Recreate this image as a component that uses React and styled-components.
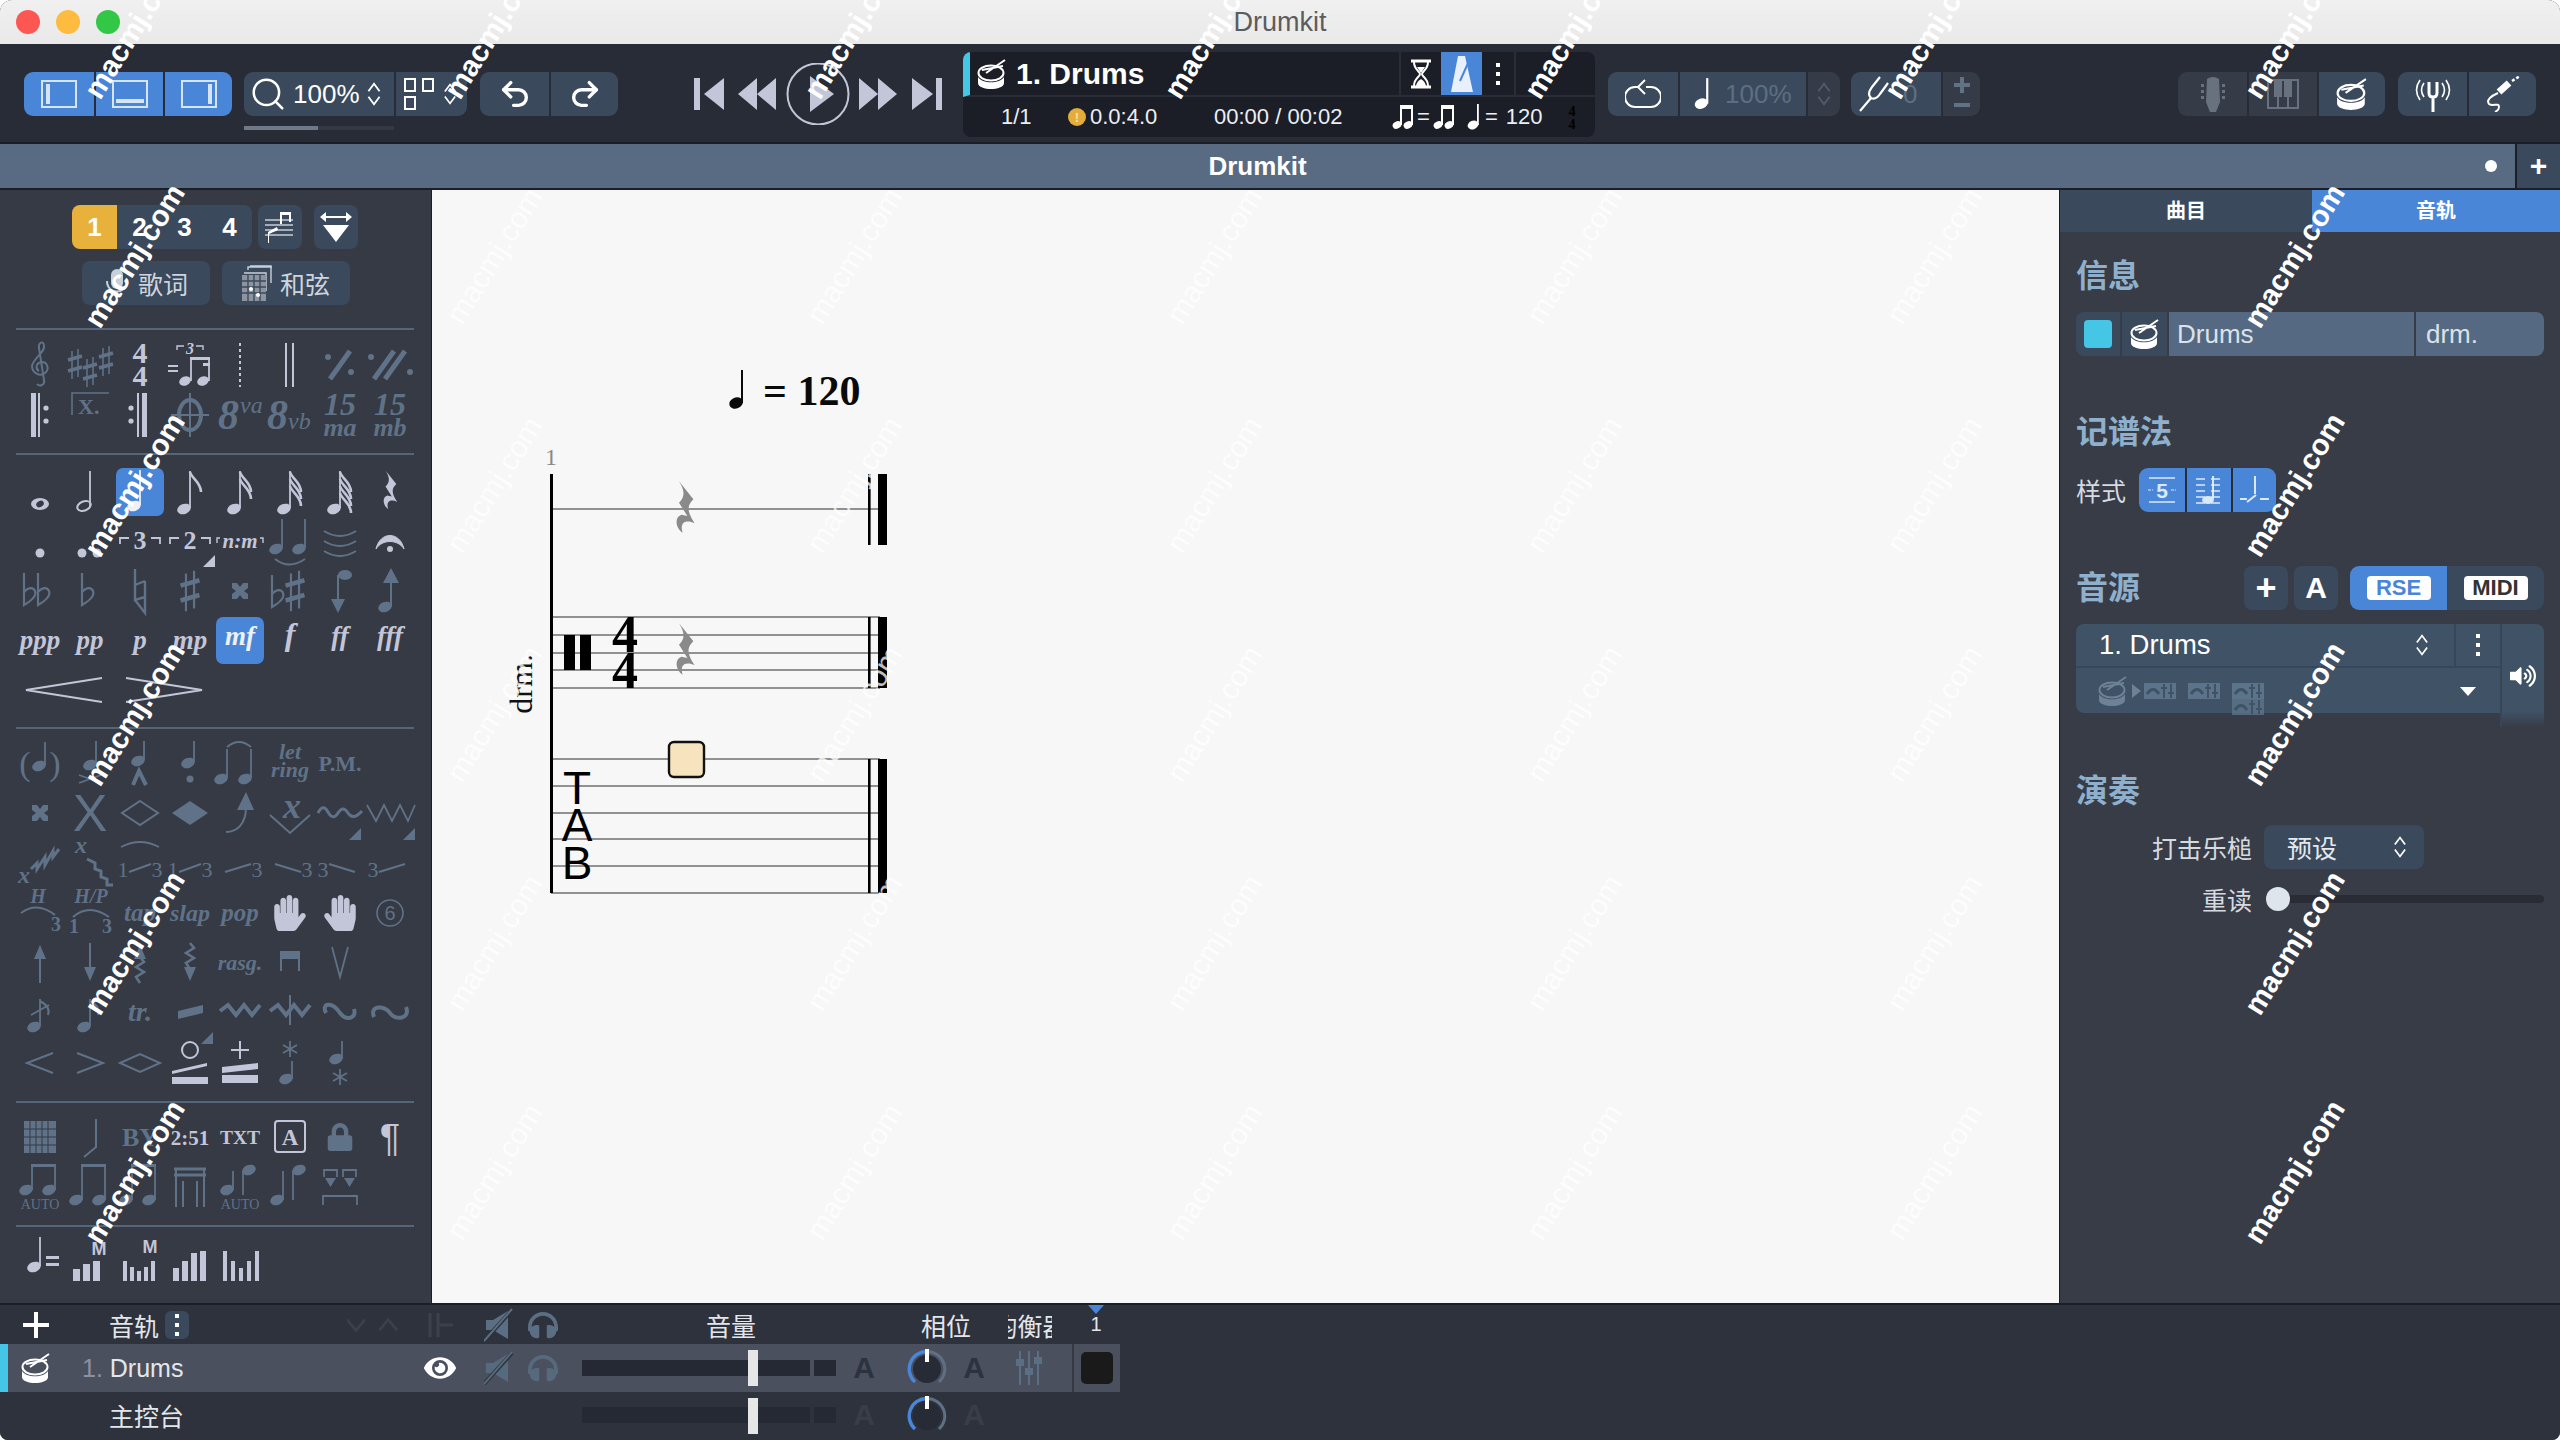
import React from 'react';
import styled, { createGlobalStyle } from 'styled-components';
import { FaEye, FaHandPaper, FaLock, FaVolumeUp, FaHeadphones } from 'react-icons/fa';
import { Undo2, Redo2, Search } from 'lucide-react';

const SANS = '"Liberation Sans", "Noto Sans CJK SC", sans-serif';
const SERIF = '"Liberation Serif", "Noto Sans CJK SC", serif';

const GlobalStyle = createGlobalStyle`
  html, body { margin: 0; padding: 0; background: #fff; }
  * { box-sizing: border-box; }
`;

const Page = styled.div`
  position: relative;
  width: 2560px;
  height: 1440px;
  overflow: hidden;
  border-radius: 12px 12px 8px 8px;
  font-family: ${SANS};
  background: #2e323c;
  display: flex;
  flex-direction: column;
`;

const TitleBar = styled.header`
  position: relative;
  height: 44px;
  flex: none;
  background: linear-gradient(#f0f0f0, #e9e9e9);
  color: #5c5c5c;
  font-size: 27px;
  display: flex;
  align-items: center;
  justify-content: center;
`;

const Lights = styled.div`
  position: absolute;
  left: 16px;
  top: 10px;
  display: flex;
  gap: 16px;
`;

const Light = styled.span`
  width: 24px;
  height: 24px;
  border-radius: 50%;
  background: ${p => p.$c};
`;

const Toolbar = styled.div`
  height: 100px;
  flex: none;
  background: #282c36;
  border-bottom: 2px solid #1b1e26;
  display: flex;
  align-items: flex-start;
  padding: 28px 0 0 24px;
`;

const Seg = styled.div`
  display: flex;
  height: 44px;
  margin-left: ${p => p.$ml || 0}px;
  border-radius: 9px;
  overflow: hidden;
  flex: none;
`;

const SegBtn = styled.div`
  width: ${p => p.$w}px;
  height: 100%;
  display: flex;
  align-items: center;
  justify-content: ${p => p.$start ? 'flex-start' : 'center'};
  gap: ${p => p.$gap || 0}px;
  padding-left: ${p => p.$pl || 0}px;
  background: ${p => ({ blue: '#4a86d8', slate: '#3a4a5c', dim: '#363c47', mute: '#333a45' }[p.$tone || 'slate'])};
  color: ${p => p.$fg || '#fff'};
  font-size: ${p => p.$fs || 26}px;
  & + & { border-left: 2px solid #282c36; }
`;

const ZoomCol = styled.div`
  margin-left: 12px;
  flex: none;
`;

const ZoomTrack = styled.div`
  width: 150px;
  height: 4px;
  margin-top: 10px;
  background: #343843;
`;

const ZoomFill = styled.div`
  width: 74px;
  height: 100%;
  background: #70788a;
`;

const Transport = styled.div`
  width: 248px;
  margin-left: 76px;
  height: 62px;
  margin-top: -9px;
  flex: none;
  color: #c3c6d8;
`;

const Lcd = styled.div`
  width: 632px;
  height: 85px;
  margin: -20px 0 0 21px;
  flex: none;
  background: #1b1e26;
  border-radius: 8px;
  overflow: hidden;
  color: #fff;
`;

const LcdTop = styled.div`
  height: 45px;
  display: flex;
  align-items: center;
  border-left: 7px solid #46c6e6;
  border-bottom: 2px solid #2a2d36;
  padding-left: 7px;
`;

const LcdName = styled.div`
  flex: 1;
  margin-left: 9px;
  font-size: 30px;
  font-weight: 700;
`;

const LcdCell = styled.div`
  width: ${p => p.$w}px;
  height: 100%;
  display: flex;
  align-items: center;
  justify-content: center;
  background: ${p => p.$blue ? '#4a86d8' : 'transparent'};
  border-left: ${p => p.$line ? '2px solid #2a2d36' : 'none'};
`;

const LcdBottom = styled.div`
  height: 40px;
  display: grid;
  grid-template-columns: 38px 67px 146px 178px 75px 99px 1fr;
  align-items: center;
  font-size: 22px;
  color: #eceef2;
`;

const Inline = styled.div`
  display: flex;
  align-items: center;
  gap: ${p => p.$gap || 0}px;
`;

const WarnDot = styled.span`
  width: 18px;
  height: 18px;
  border-radius: 50%;
  background: #e4ad3a;
  color: #f7e0ab;
  font-size: 13px;
  font-weight: 700;
  display: flex;
  align-items: center;
  justify-content: center;
`;

const TempoValue = styled.span`
  margin-left: 4px;
`;

const DocBar = styled.div`
  height: 46px;
  flex: none;
  display: flex;
  background: #586b82;
  border-bottom: 2px solid #1b1e26;
  color: #fff;
`;

const DocTitle = styled.div`
  position: relative;
  flex: 1;
  display: flex;
  align-items: center;
  justify-content: center;
  font-size: 26px;
  font-weight: 700;
`;

const DocDot = styled.span`
  position: absolute;
  right: 18px;
  top: 16px;
  width: 12px;
  height: 12px;
  border-radius: 50%;
  background: #fff;
`;

const DocPlus = styled.div`
  width: 45px;
  display: flex;
  align-items: center;
  justify-content: center;
  background: #3a4a5c;
  border-left: 2px solid #1b1e26;
  font-size: 30px;
  font-weight: 700;
`;

const Main = styled.div`
  flex: 1;
  min-height: 0;
  display: flex;
`;

const LeftPanel = styled.aside`
  width: 432px;
  flex: none;
  background: #363a44;
  border-right: 1px solid #1b1e26;
  padding-top: 15px;
`;

const ButtonRow = styled.div`
  display: flex;
  padding-left: ${p => p.$pl}px;
  gap: ${p => p.$gap || 0}px;
  margin-top: ${p => p.$mt || 0}px;
`;

const Tool = styled.div`
  width: ${p => p.$w || 45}px;
  height: 44px;
  display: flex;
  align-items: center;
  justify-content: center;
  gap: 8px;
  background: ${p => p.$on ? '#e8b13b' : '#3a4a5c'};
  color: ${p => p.$fg || '#fff'};
  font-size: ${p => p.$fs || 26}px;
  font-weight: ${p => p.$bold ? 700 : 400};
  border-radius: ${p => p.$r || '8px'};
  margin-left: ${p => p.$ml || 0}px;
  & + & { border-left: ${p => p.$joined ? '2px solid #363a44' : 'none'}; }
`;

const Divider = styled.div`
  height: 2px;
  margin: ${p => p.$mt}px 17px ${p => p.$mb}px 16px;
  background: #566679;
`;

const PaletteRow = styled.div`
  display: grid;
  grid-template-columns: repeat(8, 50px);
  height: ${p => p.$h || 50}px;
  padding-left: 15px;
`;

const Cell = styled.div`
  position: relative;
  width: 50px;
  display: flex;
  align-items: center;
  justify-content: center;
  color: ${p => (p.$hi ? '#c3c6d8' : '#5f7288')};
  &::before {
    content: '';
    display: ${p => p.$on ? 'block' : 'none'};
    position: absolute;
    inset: 1px;
    background: #4a86d8;
    border-radius: 7px;
  }
  & > * { position: relative; }
  ${p => p.$on ? 'color: #eef1f7;' : ''}
`;

const Corner = styled.span`
  position: absolute !important;
  right: ${p => p.$r ?? 0}px;
  bottom: ${p => p.$b ?? 0}px;
  width: 0;
  height: 0;
  border-bottom: 12px solid ${p => p.$hi ? '#c3c6d8' : '#5f7288'};
  border-left: 12px solid transparent;
`;

const Score = styled.section`
  flex: 1;
  min-width: 0;
  background: #f7f7f7;
`;

const RightPanel = styled.aside`
  width: 501px;
  flex: none;
  background: #383c46;
  border-left: 1px solid #1b1e26;
  color: #d5dae1;
`;

const Tabs = styled.div`
  display: flex;
  height: 42px;
`;

const Tab = styled.div`
  flex: ${p => p.$f};
  display: flex;
  align-items: center;
  justify-content: center;
  padding-bottom: 3px;
  background: ${p => p.$on ? '#4a86d8' : '#3a4a5c'};
  color: #fff;
  font-size: 20px;
  font-weight: 700;
`;

const Inspector = styled.div`
  padding: 0 16px 0 16px;
`;

const Heading = styled.h3`
  margin: ${p => p.$mt}px 0 0;
  color: #8fb0cc;
  font-size: 32px;
  line-height: 40px;
  font-weight: 700;
`;

const InfoRow = styled.div`
  display: flex;
  height: 44px;
  margin-top: 16px;
  border-radius: 8px;
  overflow: hidden;
`;

const InfoCell = styled.div`
  width: ${p => p.$w}px;
  flex: ${p => p.$grow ? 1 : 'none'};
  display: flex;
  align-items: center;
  padding-left: ${p => p.$pl || 0}px;
  justify-content: ${p => p.$pl ? 'flex-start' : 'center'};
  background: ${p => p.$light ? '#556a82' : '#3a4a5c'};
  color: #dbe2ea;
  font-size: 26px;
  & + & { border-left: 2px solid #383c46; }
`;

const Swatch = styled.span`
  width: 28px;
  height: 28px;
  border-radius: 4px;
  background: #46c6e6;
`;

const FieldRow = styled.div`
  display: flex;
  align-items: center;
  margin-top: ${p => p.$mt || 0}px;
  height: 44px;
`;

const FieldLabel = styled.label`
  width: ${p => p.$w}px;
  font-size: 25px;
  color: #d5dae1;
  text-align: ${p => p.$right ? 'right' : 'left'};
  flex: none;
`;

const SoundHead = styled.div`
  display: flex;
  align-items: center;
  margin-top: 54px;
`;

const SoundActions = styled.div`
  margin-left: auto;
  display: flex;
  gap: 6px;
`;

const SquareBtn = styled.div`
  width: 44px;
  height: 44px;
  border-radius: 8px;
  background: #3a4a5c;
  color: #fff;
  font-size: ${p => p.$fs}px;
  font-weight: 700;
  display: flex;
  align-items: center;
  justify-content: center;
`;

const EngineSeg = styled.div`
  display: flex;
  margin-left: 6px;
  border-radius: 9px;
  overflow: hidden;
`;

const EngineBtn = styled.div`
  width: 97px;
  height: 44px;
  background: ${p => p.$on ? '#4a86d8' : '#3a4a5c'};
  display: flex;
  align-items: center;
  justify-content: center;
`;

const EngineTag = styled.span`
  width: 64px;
  height: 24px;
  background: #fff;
  border-radius: 4px;
  font-size: 22px;
  font-weight: 700;
  color: ${p => p.$c};
  display: flex;
  align-items: center;
  justify-content: center;
`;

const SoundBox = styled.div`
  position: relative;
  height: 103px;
  margin-top: 14px;
  display: grid;
  grid-template-columns: 1fr 44px;
`;

const SoundMain = styled.div`
  display: flex;
  flex-direction: column;
`;

const SoundTop = styled.div`
  height: 44px;
  display: flex;
  background: #3f5266;
  border-radius: 8px 0 0 0;
  border-bottom: 2px solid #37465a;
  color: #fff;
  font-size: 27.5px;
`;

const SoundName = styled.div`
  flex: 1;
  display: flex;
  align-items: center;
  justify-content: space-between;
  padding: 0 24px 0 23px;
`;

const SoundMenu = styled.div`
  width: 46px;
  display: flex;
  align-items: center;
  justify-content: center;
  border-left: 2px solid #37465a;
`;

const SoundFx = styled.div`
  position: relative;
  height: 45px;
  background: #3f5266;
  border-radius: 0 0 0 8px;
  display: flex;
  align-items: center;
  padding-left: 22px;
  gap: 12px;
  color: #6d8296;
`;

const FxArrow = styled.span`
  margin: 0 -9px 0 -8px;
  border-top: 7px solid transparent;
  border-bottom: 7px solid transparent;
  border-left: 9px solid #6d8296;
`;

const ChipStack = styled.span`
  position: relative;
  display: flex;
`;

const ChipBelow = styled.span`
  position: absolute;
  left: 0;
  top: 16px;
  opacity: .8;
`;

const SoundVol = styled.div`
  background: linear-gradient(#3f5266 85%, #383c46);
  border-left: 2px solid #37465a;
  border-radius: 0 8px 0 0;
  display: flex;
  align-items: center;
  justify-content: center;
  color: #fff;
  font-size: 26px;
`;

const FxDrop = styled.span`
  position: absolute;
  right: 24px;
  top: 19px;
  border-left: 8px solid transparent;
  border-right: 8px solid transparent;
  border-top: 9px solid #fff;
`;

const Select = styled.div`
  width: 160px;
  height: 44px;
  margin-left: 12px;
  border-radius: 8px;
  background: #3a4a5c;
  color: #e6eaef;
  font-size: 25px;
  display: flex;
  align-items: center;
  justify-content: space-between;
  padding: 0 16px 0 23px;
`;

const Slider = styled.div`
  position: relative;
  flex: 1;
  margin-left: 26px;
  height: 8px;
  background: #292c35;
  border-radius: 4px;
`;

const Knob = styled.span`
  position: absolute;
  left: -12px;
  top: -8px;
  width: 24px;
  height: 24px;
  border-radius: 50%;
  background: #dfe5ec;
`;

const Mixer = styled.div`
  flex: none;
  height: 137px;
  background: #2e323c;
  border-top: 2px solid #1b1e26;
  color: #e3e6eb;
`;

const MixerRow = styled.div`
  display: grid;
  grid-template-columns: 8px 56px 346px 60px 58px 30px 278px 56px 70px 24px 86px 48px 1fr;
  align-items: center;
  height: ${p => p.$h || 48}px;
  font-size: 25px;
  background: ${p => p.$on ? 'linear-gradient(90deg, #4b505e 0 1120px, #2e323c 1120px)' : 'transparent'};
`;

const Accent = styled.div`
  height: 100%;
  background: ${p => p.$on ? '#46c6e6' : 'transparent'};
`;

const Slot = styled.div`
  height: 100%;
  display: flex;
  align-items: center;
  justify-content: ${p => p.$start ? 'flex-start' : 'center'};
  padding-left: ${p => p.$pl || 0}px;
  color: ${p => p.$c || 'inherit'};
  gap: ${p => p.$gap || 0}px;
  white-space: nowrap;
`;

const RowNo = styled.span`
  color: #8b919e;
  margin-left: 18px;
`;

const MenuChip = styled.span`
  width: 27px;
  height: 28px;
  margin-left: 6px;
  background: #3a4a5c;
  border-radius: 6px;
  display: flex;
  align-items: center;
  justify-content: center;
`;

const HeaderArrows = styled.svg`
  margin-left: 158px;
`;

const FaderWrap = styled.div`
  position: relative;
  height: 100%;
  display: flex;
  align-items: center;
  gap: 4px;
  padding-left: 24px;
`;

const FaderTrack = styled.span`
  width: ${p => p.$w}px;
  height: 16px;
  background: #252934;
`;

const FaderHandle = styled.span`
  position: absolute;
  left: 190px;
  top: 6px;
  width: 10px;
  height: 36px;
  background: #e6e6e6;
`;

const LetterA = styled.span`
  font-size: 30px;
  font-weight: 700;
  color: ${p => p.$dim ? '#383d48' : '#2c3340'};
`;

const EqClip = styled.div`
  width: 44px;
  margin-left: 22px;
  overflow: hidden;
  display: flex;
  justify-content: center;
  white-space: nowrap;
`;

const BarCell = styled.div`
  position: relative;
  height: 100%;
  display: flex;
  align-items: center;
  justify-content: center;
  border-left: ${p => p.$line ? '2px solid #363a44' : 'none'};
  font-size: 20px;
`;

const BarMark = styled.span`
  position: absolute;
  top: 0;
  left: 16px;
  border-left: 8px solid transparent;
  border-right: 8px solid transparent;
  border-top: 9px solid #4a86d8;
`;

const BeatBox = styled.span`
  width: 32px;
  height: 32px;
  border-radius: 5px;
  background: #1a1a1a;
`;

const WatermarkLayer = styled.div`
  position: absolute;
  left: -46px;
  top: -88px;
  display: grid;
  grid-template-columns: repeat(7, 360px);
  grid-auto-rows: 229px;
  pointer-events: none;
`;

const Watermark = styled.span`
  display: flex;
  align-items: center;
  justify-content: center;
  transform: rotate(-58deg);
  font-size: ${p => p.$faint ? 30 : 29.5}px;
  font-weight: ${p => p.$faint ? 400 : 700};
  color: #fff;
  opacity: ${p => p.$faint ? 0.75 : 1};
  white-space: nowrap;
`;

/* ---- drawings ---- */

const G = ({ children, w = 50, h = 48 }) => (
  <svg width={w} height={h} viewBox={`0 0 ${w} ${h}`} fill="currentColor" style={{ overflow: 'visible', flex: 'none' }}>
    {children}
  </svg>
);

const Head = ({ x, y, rx = 7, ry = 5 }) => (
  <ellipse cx={x} cy={y} rx={rx} ry={ry} transform={`rotate(-22 ${x} ${y})`} />
);

const Stem = ({ x, y1, y2, w = 1.8 }) => <line x1={x} y1={y1} x2={x} y2={y2} stroke="currentColor" strokeWidth={w} />;

const Note = ({ x = 20, y = 38, h = 30 }) => (
  <>
    <Head x={x} y={y} />
    <Stem x={x + 6} y1={y - 1} y2={y - h} />
  </>
);

const T = ({ x = 25, y, s, b = true, i = false, a = 'middle', f = SERIF, o, children }) => (
  <text x={x} y={y} fontSize={s} fontWeight={b ? 700 : 400} fontStyle={i ? 'italic' : 'normal'} textAnchor={a} fontFamily={f} opacity={o}>
    {children}
  </text>
);

const L = ({ d, w = 2, ...rest }) => <path d={d} fill="none" stroke="currentColor" strokeWidth={w} {...rest} />;

const Sharp = ({ x, y, k = 1 }) => (
  <g transform={`translate(${x} ${y}) scale(${k})`}>
    <L d="M-3 -13 V15 M3 -15 V13" w={1.6} />
    <L d="M-7 -4 L7 -8 M-7 7 L7 3" w={3.4} />
  </g>
);

const Flat = ({ x, y, k = 1 }) => (
  <g transform={`translate(${x} ${y}) scale(${k})`}>
    <L d="M-5 -20 V12 C2 8 8 3 6 -2 C4 -7 -2 -5 -5 -1" w={2.2} />
  </g>
);

const Flags = ({ x, y, n }) => (
  <>
    {Array.from({ length: n }, (_, i) => (
      <L key={i} d={`M${x} ${y + i * 7} C${x + 2} ${y + 7 + i * 7} ${x + 11} ${y + 10 + i * 7} ${x + 11} ${y + 20 + i * 7}`} w={2.6} />
    ))}
  </>
);

const Rest = ({ x = 25, y = 24, k = 1 }) => (
  <path
    transform={`translate(${x} ${y}) scale(${k})`}
    d="M-5 -24 L7 -9 C2 -4 1 0 8 11 C2 8 -5 9 -2 19 C-8 15 -9 6 -3 4 L2 5 L-5 -6 C0 -11 0 -16 -5 -24Z"
  />
);

const XHead = ({ x = 25, y = 24, k = 1 }) => (
  <path transform={`translate(${x} ${y}) scale(${k})`} d="M-8 -8 H-3 L0 -4 L3 -8 H8 V-3 L4 0 L8 3 V8 H3 L0 4 L-3 8 H-8 V3 L-4 0 L-8 -3Z" />
);

const DrumIcon = ({ s = 30, c = 'currentColor' }) => (
  <svg width={s} height={s} viewBox="0 0 30 30" style={{ flex: 'none', color: c }}>
    <ellipse cx="14" cy="14" rx="12.5" ry="7.5" fill="none" stroke="currentColor" strokeWidth="2" />
    <path d="M1 18 C5 25 23 25 27 18 V24 C27 28 20 30 14 30 S1 28 1 24Z" fill="currentColor" />
    <path d="M9 14 L28 1 M5 11 L26 7" stroke="currentColor" strokeWidth="2" fill="none" />
  </svg>
);

const Stepper = ({ w = 16, h = 28, c = '#fff' }) => (
  <svg width={w} height={h} viewBox="0 0 16 28" fill="none" stroke={c} strokeWidth="2">
    <path d="M2 11 L8 3 L14 11 M2 17 L8 25 L14 17" />
  </svg>
);

const VDots = ({ c = '#fff' }) => (
  <svg width="6" height="22" viewBox="0 0 6 22" fill={c}>
    <rect x="1" width="4" height="4" />
    <rect x="1" y="9" width="4" height="4" />
    <rect x="1" y="18" width="4" height="4" />
  </svg>
);

const PanelIcon = ({ side }) => (
  <svg width="36" height="28" viewBox="0 0 36 28" fill="none" stroke="#d5e4f7" strokeWidth="2">
    <rect x="1" y="1" width="34" height="26" />
    {side === 'left' && <rect x="5" y="4" width="4" height="20" fill="#d5e4f7" stroke="none" />}
    {side === 'bottom' && <rect x="4" y="19" width="28" height="4" fill="#d5e4f7" stroke="none" />}
    {side === 'right' && <rect x="27" y="4" width="4" height="20" fill="#d5e4f7" stroke="none" />}
  </svg>
);

const LayoutIcon = () => (
  <svg width="30" height="32" viewBox="0 0 30 32" fill="none" stroke="#fff" strokeWidth="2">
    <rect x="1" y="1" width="10" height="12" />
    <rect x="19" y="1" width="10" height="12" />
    <rect x="1" y="19" width="10" height="12" />
  </svg>
);

const TransportIcons = () => (
  <svg width="248" height="62" viewBox="694 63 248 62" fill="currentColor">
    <rect x="694" y="78" width="6" height="32" />
    <path d="M724 78 V110 L704 94Z" />
    <path d="M738 94 L757 78 V110Z M757 94 L776 78 V110Z" />
    <circle cx="818" cy="94" r="30.5" fill="none" stroke="currentColor" strokeWidth="2" />
    <path d="M810 76 V112 L834 94Z" />
    <path d="M859 78 L878 94 L859 110Z M878 78 L897 94 L878 110Z" />
    <path d="M912 78 L933 94 L912 110Z" />
    <rect x="936" y="78" width="6" height="32" />
  </svg>
);

const Hourglass = () => (
  <svg width="24" height="30" viewBox="0 0 24 30" fill="none" stroke="#fff" strokeWidth="2">
    <path d="M2 2 H22 M2 28 H22" strokeWidth="3" />
    <path d="M5 3 C5 11 11 12 11 15 C11 18 5 19 5 27 M19 3 C19 11 13 12 13 15 C13 18 19 19 19 27" />
    <path d="M7 27 C8 22 11 21 12 20 C13 21 16 22 17 27Z M8 8 H16 L12 14Z" fill="#fff" stroke="none" />
  </svg>
);

const Metronome = () => (
  <svg width="24" height="36" viewBox="0 0 24 36" fill="#e8f0fb">
    <path d="M8 0 H15 L23 36 H1Z M12 22 L20 4" />
    <path d="M10 25 L19 5" stroke="#4a86d8" strokeWidth="2" fill="none" />
  </svg>
);

const TinyNote = ({ s = 1, c = '#fff' }) => (
  <svg width={10 * s + 4} height={26 * s} viewBox="0 0 14 26" fill={c}>
    <ellipse cx="6" cy="21" rx="5.5" ry="4.2" transform="rotate(-22 6 21)" />
    <rect x="10" width="1.8" height="21" />
  </svg>
);

const Beamed = () => (
  <svg width="22" height="26" viewBox="0 0 22 26" fill="#fff">
    <ellipse cx="5" cy="21" rx="4.5" ry="3.6" transform="rotate(-22 5 21)" />
    <ellipse cx="16" cy="21" rx="4.5" ry="3.6" transform="rotate(-22 16 21)" />
    <rect x="8" y="2" width="2" height="19" />
    <rect x="19" y="2" width="2" height="19" />
    <rect x="8" y="1" width="13" height="4" />
  </svg>
);

const TimeSig = () => (
  <svg width="12" height="26" viewBox="0 0 12 26">
    <text x="6" y="12" textAnchor="middle" fontSize="14" fontWeight="700" fontFamily={SERIF} fill="#000">4</text>
    <text x="6" y="25" textAnchor="middle" fontSize="14" fontWeight="700" fontFamily={SERIF} fill="#000">4</text>
  </svg>
);

const LoopIcon = () => (
  <svg width="36" height="32" viewBox="0 0 36 32" fill="none" stroke="#fff" strokeWidth="2">
    <path d="M21 9 H26 A10 10 0 0 1 26 29 H10 A10 10 0 0 1 10 9 H14" />
    <path d="M20 2 L13 9 L20 16" />
  </svg>
);

const ForkIcon = () => (
  <svg width="34" height="36" viewBox="0 0 34 36" fill="none" stroke="#fff" strokeWidth="2.2">
    <path d="M1 35 L12 22 M12 22 C8 18 11 14 13 11 L21 1 M12 22 C16 24 19 21 21 18 L29 7" />
  </svg>
);

const Headstock = () => (
  <svg width="26" height="36" viewBox="0 0 26 36" fill="#68727f">
    <path d="M7 3 Q13 -1 19 3 L20 26 L16 36 H10 L6 26Z" />
    <rect x="1" y="8" width="3" height="3" />
    <rect x="1" y="14" width="3" height="3" />
    <rect x="1" y="20" width="3" height="3" />
    <rect x="22" y="8" width="3" height="3" />
    <rect x="22" y="14" width="3" height="3" />
    <rect x="22" y="20" width="3" height="3" />
  </svg>
);

const PianoIcon = () => (
  <svg width="32" height="30" viewBox="0 0 32 30" fill="none" stroke="#68727f" strokeWidth="2">
    <rect x="1" y="1" width="30" height="28" />
    <path d="M11 29 V1 M21 29 V1" />
    <path d="M8 1 H14 V17 H8Z M18 1 H24 V17 H18Z" fill="#68727f" />
  </svg>
);

const ForkWaves = () => (
  <svg width="36" height="36" viewBox="0 0 36 36" fill="none" stroke="#fff" strokeWidth="1.6">
    <path d="M14 6 V17 Q14 21 18 21 Q22 21 22 17 V6 M18 21 V36" strokeWidth="3" />
    <path d="M9 7 Q4 14 9 21 M27 7 Q32 14 27 21 M5 4 Q-2 14 5 24 M31 4 Q38 14 31 24" />
  </svg>
);

const CableIcon = () => (
  <svg width="36" height="36" viewBox="0 0 36 36" fill="none" stroke="#fff" strokeWidth="2">
    <path d="M14 16 L24 7" strokeWidth="7" />
    <path d="M27 5 L35 0" strokeWidth="2.5" strokeDasharray="3 2" />
    <path d="M13 17 C6 20 1 24 4 28 C8 31 14 26 14 31 C14 34 12 35 10 36" />
  </svg>
);

const MuteIcon = ({ c }) => (
  <svg width="30" height="34" viewBox="0 0 30 34" fill={c}>
    <path d="M2 12 H9 L24 3 V31 L9 22 H2Z" />
    <path d="M0 33 L28 2" stroke="#2e323c" strokeWidth="4" />
    <path d="M0 33 L28 1" stroke={c} strokeWidth="2" />
  </svg>
);

const MixIcon = ({ c = '#5b6f84', w = 26, h = 34 }) => (
  <svg width={w} height={h} viewBox="0 0 26 34" fill={c}>
    <rect x="3" width="2" height="34" />
    <rect x="12" width="2" height="34" />
    <rect x="21" width="2" height="34" />
    <rect y="8" width="8" height="7" />
    <rect x="9" y="17" width="8" height="7" />
    <rect x="18" y="6" width="8" height="7" />
  </svg>
);

const PanKnob = ({ right = '#5f6f84' }) => (
  <svg width="40" height="40" viewBox="0 0 40 40" fill="none">
    <circle cx="20" cy="21" r="14" fill="#272b35" />
    <path d="M8 34 A17.5 17.5 0 0 1 20 3.5" stroke="#4a86d8" strokeWidth="3.4" />
    <path d="M20 3.5 A17.5 17.5 0 0 1 32 34" stroke={right} strokeWidth="3" />
    <rect x="18" y="1" width="4" height="13" fill="#fff" />
  </svg>
);

const FxChip = () => (
  <svg width="32" height="16" viewBox="0 0 32 16">
    <rect width="32" height="16" fill="#5c7489" />
    <path d="M3 11 Q9 2 15 11" stroke="#3f5266" strokeWidth="3" fill="none" />
    <path d="M20 1 V15 M27 1 V15 M17 5 H23 M24 10 H30" stroke="#3f5266" strokeWidth="2" />
  </svg>
);

const MicIcon = () => (
  <svg width="26" height="32" viewBox="0 0 26 32" fill="#c9cfd8">
    <rect x="7" y="2" width="12" height="20" rx="6" />
    <path d="M3 14 C3 28 23 28 23 14" fill="none" stroke="#c9cfd8" strokeWidth="2" />
    <rect x="12" y="24" width="2" height="7" />
  </svg>
);

const ChordIcon = () => (
  <svg width="30" height="36" viewBox="0 0 30 36" fill="none" stroke="#c9cfd8" strokeWidth="1.4">
    <path d="M6 5 V2 H30 M8 1 H29 V18 M2 8 H24 V26" />
    <rect x="0" y="10" width="24" height="26" fill="#8d939f" stroke="none" />
    <path d="M0 16 H24 M0 22 H24 M0 28 H24 M6 10 V36 M12 10 V36 M18 10 V36" stroke="#3a4a5c" />
    <circle cx="9" cy="24" r="2" fill="#fff" stroke="none" />
    <circle cx="16" cy="30" r="2" fill="#fff" stroke="none" />
  </svg>
);

const ScoreStyleIcon = ({ kind }) => (
  <svg width="30" height="30" viewBox="0 0 30 30" fill="#dbe8f8" stroke="#dbe8f8" strokeWidth="1">
    {kind === 'tab' && (
      <>
        <path d="M2 3 H28 M2 27 H28" strokeWidth="1.4" />
        <path d="M1 15 H6 M24 15 H29" strokeDasharray="3 1" />
        <text x="15" y="23" fontSize="21" fontWeight="700" textAnchor="middle" stroke="none" fontFamily={SANS}>5</text>
      </>
    )}
    {kind === 'std' && (
      <>
        <path d="M2 4 H28 M2 10 H28 M2 16 H28 M2 22 H28 M2 28 H28" strokeDasharray="9 6" strokeWidth="1.4" />
        <ellipse cx="14" cy="25" rx="6" ry="4" stroke="none" />
        <path d="M19 24 V1" strokeWidth="2" />
      </>
    )}
    {kind === 'slash' && (
      <>
        <path d="M15 1 V19 M7 27 L16 20 M0 24 H7 M20 24 H29" strokeWidth="2" fill="none" />
      </>
    )}
  </svg>
);

const ScoreDrawing = () => (
  <svg width="1627" height="1113" viewBox="432 190 1627 1113" style={{ display: 'block' }}>
    <g fill="#0a0a0a">
      <ellipse cx="736" cy="403" rx="7" ry="5.5" transform="rotate(-22 736 403)" />
      <rect x="741" y="370" width="2" height="33" />
      <text x="763" y="405" fontFamily={SERIF} fontWeight="700" fontSize="42">= 120</text>
    </g>
    <text x="551" y="465" textAnchor="middle" fontFamily={SERIF} fontSize="24" fill="#888">1</text>

    <g stroke="#6f6f6f" strokeWidth="1.4">
      <path d="M551 509 H880" />
      {[617, 635, 653, 670, 688].map(y => <path key={y} d={`M551 ${y} H880`} />)}
      {[759, 786, 813, 839, 866, 893].map(y => <path key={y} d={`M551 ${y} H880`} />)}
    </g>

    <rect x="550" y="474" width="3" height="419" fill="#000" />
    {[[474, 71], [617, 71], [759, 134]].map(([y, h]) => (
      <g key={y} fill="#000">
        <rect x="868" y={y} width="2.6" height={h} />
        <rect x="878" y={y} width="9" height={h} />
      </g>
    ))}

    <g fill="#8a8a8a">
      <Rest x={685} y={510} k={1.2} />
      <Rest x={685} y={652} k={1.2} />
    </g>

    <rect x="564" y="635" width="11" height="35" fill="#000" />
    <rect x="580" y="635" width="11" height="35" fill="#000" />
    <g fontFamily={SERIF} fontWeight="700" fontSize="52" fill="#000" textAnchor="middle">
      <text x="625" y="652">4</text>
      <text x="625" y="688">4</text>
    </g>

    <g fontFamily={SANS} fontSize="46" fill="#000" textAnchor="middle">
      <text x="577" y="804">T</text>
      <text x="577" y="841">A</text>
      <text x="577" y="879">B</text>
    </g>

    <text
      transform="translate(532 684) rotate(-90)"
      textAnchor="middle"
      fontFamily={SERIF}
      fontSize="32"
      fill="#111"
    >
      drm.
    </text>

    <rect x="669" y="742" width="35" height="35" rx="5" fill="#f7e3bd" stroke="#111" strokeWidth="2.4" />
  </svg>
);

/* ---- palette rows ---- */

const Treble = () => (
  <G><L d="M22 43 c3 3 8 1 7 -4 L24 7 c-1 -5 4 -8 5 -3 c2 7 -11 13 -12 21 c0 7 8 11 13 7 c5 -4 2 -12 -4 -11 c-5 1 -6 7 -2 9" /></G>
);

const StaffRows = () => (
  <>
    <PaletteRow>
      <Cell><Treble /></Cell>
      <Cell><G><Sharp x={10} y={23} /><Sharp x={25} y={31} /><Sharp x={41} y={20} /></G></Cell>
      <Cell $hi><G><T y={22} s={30}>4</T><T y={45} s={30}>4</T></G></Cell>
      <Cell $hi>
        <G>
          <T x={25} y={13} s={16} i>3</T>
          <L d="M12 9 V5 H19 M31 5 H38 V9" w={1.4} />
          <Head x={20} y={40} rx={6} ry={4.5} /><Head x={38} y={40} rx={6} ry={4.5} />
          <Stem x={26} y1={40} y2={18} /><Stem x={44} y1={40} y2={18} />
          <rect x="25" y="16" width="20" height="3" />
          <rect x="38" y="22" width="7" height="3" />
          <L d="M3 25 H13 M3 30 H13" w={2} />
        </G>
      </Cell>
      <Cell $hi><G><L d="M25 2 V46" strokeDasharray="3 3" /></G></Cell>
      <Cell $hi><G><L d="M21 2 V46 M28 2 V46" /></G></Cell>
      <Cell>
        <G><L d="M15 38 L35 10" w={5} /><circle cx="13" cy="16" r="3" /><circle cx="36" cy="31" r="3" /></G>
      </Cell>
      <Cell>
        <G><L d="M9 38 L29 10 M20 38 L40 10" w={5} /><circle cx="6" cy="16" r="3" /><circle cx="45" cy="31" r="3" /></G>
      </Cell>
    </PaletteRow>
    <PaletteRow>
      <Cell $hi><G><rect x="16" y="2" width="5" height="44" /><rect x="23" y="2" width="2" height="44" /><circle cx="31" cy="17" r="2.6" /><circle cx="31" cy="30" r="2.6" /></G></Cell>
      <Cell><G w={50}><L d="M7 24 V2 H44" w={1.6} /><T x={13} y={23} s={22} a="start">X.</T></G></Cell>
      <Cell $hi><G><circle cx="16" cy="17" r="2.6" /><circle cx="16" cy="30" r="2.6" /><rect x="22" y="2" width="2" height="44" /><rect x="27" y="2" width="5" height="44" /></G></Cell>
      <Cell>
        <G><ellipse cx="25" cy="24" rx="11" ry="15" fill="none" stroke="currentColor" strokeWidth="4" /><L d="M25 2 V46 M6 24 H44" /></G>
      </Cell>
      <Cell><G><T x={3} y={38} s={42} i a="start">8</T><T x={25} y={22} s={24} i b={false} a="start">va</T></G></Cell>
      <Cell><G><T x={2} y={38} s={42} i a="start">8</T><T x={23} y={38} s={24} i b={false} a="start">vb</T></G></Cell>
      <Cell><G><T y={24} s={32} i>15</T><T y={45} s={26} i>ma</T></G></Cell>
      <Cell><G><T y={24} s={32} i>15</T><T y={45} s={26} i>mb</T></G></Cell>
    </PaletteRow>
  </>
);

const noteRow = [1, 2, 3, 4].map(n => (
  <Cell $hi key={n}>
    <G><Note x={19} y={41} h={38} /><Flags x={25} y={4} n={n} /></G>
  </Cell>
));

const NoteRows = () => (
  <>
    <PaletteRow $h={49.5}>
      <Cell $hi><G><ellipse cx="25" cy="36" rx="9" ry="6" /><ellipse cx="25" cy="36" rx="4" ry="3" fill="#363a44" transform="rotate(-30 25 36)" /></G></Cell>
      <Cell $hi><G><ellipse cx="19" cy="38" rx="7" ry="4.6" fill="none" stroke="currentColor" strokeWidth="2" transform="rotate(-22 19 38)" /><Stem x={25} y1={38} y2={3} /></G></Cell>
      <Cell $on><G><Note x={19} y={38} h={36} /></G></Cell>
      {noteRow}
      <Cell $hi><G><g transform="translate(25 24) scale(.9)"><Rest x={0} y={0} /></g></G></Cell>
    </PaletteRow>
    <PaletteRow $h={49.5}>
      <Cell $hi><G><circle cx="25" cy="36" r="4.5" /></G></Cell>
      <Cell $hi><G><circle cx="17" cy="36" r="4.5" /><circle cx="32" cy="36" r="4.5" /></G></Cell>
      <Cell $hi><G><L d="M5 27 V21 H14 M36 21 H45 V27" w={1.8} /><T y={32} s={26}>3</T></G></Cell>
      <Cell $hi><G><L d="M5 27 V21 H14 M36 21 H45 V27" w={1.8} /><T y={32} s={26}>2</T></G><Corner $r={0} $b={-1} $hi /></Cell>
      <Cell $hi><G><L d="M2 26 V21 H5 M45 21 H48 V26" w={1.4} /><T y={31} s={21} i>n:m</T></G></Cell>
      <Cell><G><Note x={11} y={32} h={30} /><Note x={34} y={32} h={30} /><L d="M10 42 Q24 53 40 42" /></G></Cell>
      <Cell><G><L d="M9 14 Q25 24 41 14 M9 24 Q25 34 41 24 M9 34 Q25 44 41 34" /></G></Cell>
      <Cell $hi><G><L d="M11 32 C15 14 35 14 39 32 C33 22 17 22 11 32Z" w={1} fill="currentColor" /><circle cx="25" cy="32" r="3" /></G></Cell>
    </PaletteRow>
    <PaletteRow $h={49.5}>
      <Cell><G><Flat x={14} y={26} /><Flat x={28} y={26} /></G></Cell>
      <Cell><G><Flat x={22} y={26} /></G></Cell>
      <Cell><G><L d="M20 2 V33 L30 30 M30 14 V46 L20 33 M20 18 L30 14" w={2.4} /></G></Cell>
      <Cell><G><Sharp x={25} y={24} k={1.35} /></G></Cell>
      <Cell><G><XHead k={1} /></G></Cell>
      <Cell><G><Flat x={12} y={28} /><Sharp x={30} y={24} k={1.35} /></G></Cell>
      <Cell><G><ellipse cx="30" cy="8" rx="7" ry="5" /><L d="M23 8 V34" /><path d="M16 32 H30 L23 46Z" /></G></Cell>
      <Cell><G><Head x={20} y={40} /><L d="M26 40 V14" /><path d="M18 16 H34 L26 1Z" /></G></Cell>
    </PaletteRow>
    <PaletteRow $h={49.5}>
      {['ppp', 'pp', 'p', 'mp', 'mf', 'f', 'ff', 'fff'].map(d => (
        <Cell $hi $on={d === 'mf'} key={d}>
          <G><T y={d === 'f' || d === 'ff' || d === 'fff' || d === 'mf' ? 29 : 33} s={d === 'f' ? 32 : 27} i>{d}</T></G>
        </Cell>
      ))}
    </PaletteRow>
    <PaletteRow $h={49.5}>
      <Cell $hi><G><L d="M87 12 L11 24 L87 36" /></G></Cell>
      <Cell />
      <Cell $hi><G><L d="M11 12 L87 24 L11 36" /></G></Cell>
    </PaletteRow>
  </>
);

const Frets = ({ a, b }) => (
  <>
    <L d={`M${a} 8 Q25 -2 ${b} 8`} w={1.8} />
  </>
);

const TechniqueRows = () => (
  <>
    <PaletteRow>
      <Cell><G><Note x={24} y={27} h={24} /><T x={10} y={36} s={34} b={false}>(</T><T x={40} y={36} s={34} b={false}>)</T></G></Cell>
      <Cell><G><Note x={25} y={26} h={24} /><L d="M14 36 L36 44 M36 36 L14 44" w={1.6} /></G></Cell>
      <Cell><G><Note x={23} y={22} h={20} /><L d="M18 46 L24 32 L31 46" w={4} /></G></Cell>
      <Cell><G><Note x={23} y={24} h={22} /><circle cx="25" cy="40" r="3.5" /></G></Cell>
      <Cell><G><Note x={6} y={40} h={30} /><Note x={30} y={40} h={30} /><L d="M12 8 Q24 -2 36 8" w={1.8} /></G></Cell>
      <Cell><G><T y={20} s={22} i>let</T><T y={38} s={22} i>ring</T></G></Cell>
      <Cell><G><T y={32} s={22}>P.M.</T></G></Cell>
      <Cell />
    </PaletteRow>
    <PaletteRow>
      <Cell><G><XHead /></G></Cell>
      <Cell><G><T y={42} s={52} b={false} f={SANS}>X</T></G></Cell>
      <Cell><G><path d="M25 12 L43 24 L25 36 L7 24Z" fill="none" stroke="currentColor" strokeWidth="2" /></G></Cell>
      <Cell><G><path d="M25 12 L43 24 L25 36 L7 24Z" /></G></Cell>
      <Cell><G><L d="M11 43 C22 43 31 35 31 18" w={2} /><path d="M22 21 L31 3 L39 21Z" /></G></Cell>
      <Cell><G><T x={27} y={29} s={36} i>x</T><L d="M5 26 L25 44 L45 26" /></G></Cell>
      <Cell><G><L d="M3 24 Q8 14 13 23 T23 24 T33 24 T47 22" w={3} /></G><Corner $r={4} $b={-2} /></Cell>
      <Cell><G><L d="M2 16 L11 32 L19 16 L27 32 L35 16 L43 32 L50 16" w={1.8} /></G><Corner $r={0} $b={-2} /></Cell>
    </PaletteRow>
    <PaletteRow>
      <Cell><G><T x={9} y={44} s={24} i>x</T><L d="M16 30 L22 24 V30 L30 18 V26 L38 12 V18 L44 10" w={3} /></G></Cell>
      <Cell><G><T x={16} y={14} s={24} i>x</T><L d="M22 20 L30 24 V30 L36 32 V38 L42 40 V46 L48 46" w={3} /></G></Cell>
      <Cell><G><T x={8} y={38} s={22} b={false}>1</T><T x={42} y={38} s={22} b={false}>3</T><L d="M14 33 L36 25" /><Frets a={6} b={44} /></G></Cell>
      <Cell><G><T x={8} y={38} s={22} b={false}>1</T><T x={42} y={38} s={22} b={false}>3</T><L d="M14 33 L36 25" /></G></Cell>
      <Cell><G><T x={42} y={38} s={22} b={false}>3</T><L d="M10 33 L36 25" /></G></Cell>
      <Cell><G><T x={42} y={38} s={22} b={false}>3</T><L d="M10 25 L36 33" /></G></Cell>
      <Cell><G><T x={8} y={38} s={22} b={false}>3</T><L d="M14 25 L40 33" /></G></Cell>
      <Cell><G><T x={8} y={38} s={22} b={false}>3</T><L d="M14 33 L40 25" /></G></Cell>
    </PaletteRow>
    <PaletteRow>
      <Cell><G><T x={23} y={14} s={20} i>H</T><L d="M6 24 Q22 12 40 26" /><T x={41} y={42} s={20}>3</T></G></Cell>
      <Cell><G><T x={26} y={14} s={20} i>H/P</T><L d="M8 28 Q24 14 44 28" /><T x={9} y={44} s={20}>1</T><T x={42} y={44} s={20}>3</T></G></Cell>
      <Cell><G><T y={32} s={25} i>tap</T></G></Cell>
      <Cell><G><T y={32} s={24} i>slap</T></G></Cell>
      <Cell><G><T y={32} s={25} i>pop</T></G></Cell>
      <Cell $hi><FaHandPaper size={36} style={{ transform: 'scaleX(-1)' }} /></Cell>
      <Cell $hi><FaHandPaper size={36} /></Cell>
      <Cell><G><circle cx="25" cy="24" r="13" fill="none" stroke="currentColor" strokeWidth="1.6" /><T y={31} s={20} b={false} f={SANS}>6</T></G></Cell>
    </PaletteRow>
    <PaletteRow>
      <Cell><G><path d="M25 6 L31 20 H19Z" /><L d="M25 18 V44" /></G></Cell>
      <Cell><G><path d="M25 42 L31 28 H19Z" /><L d="M25 30 V4" /></G></Cell>
      <Cell><G><path d="M25 6 L31 20 H19Z" /><L d="M25 18 L29 23 L21 28 L29 33 L21 38 L25 44" w={2.6} /></G></Cell>
      <Cell><G><path d="M25 42 L31 28 H19Z" /><L d="M25 4 L29 9 L21 14 L29 19 L21 24 L25 30" w={2.6} /></G></Cell>
      <Cell><G><T y={31} s={22} i>rasg.</T></G></Cell>
      <Cell><G><path d="M15 12 H35 V32 H33 V20 H17 V32 H15Z" /></G></Cell>
      <Cell><G><L d="M17 8 L25 38 L33 8" w={1.8} /></G></Cell>
      <Cell />
    </PaletteRow>
    <PaletteRow>
      <Cell><G><Note x={19} y={38} h={28} /><L d="M25 12 Q36 18 33 26 M16 26 L34 16" /></G></Cell>
      <Cell><G><Note x={19} y={38} h={28} /><L d="M25 12 Q36 18 33 26" /></G></Cell>
      <Cell><G><T y={32} s={28} i>tr.</T></G></Cell>
      <Cell><G><path d="M13 22 L38 16 V24 L13 30Z" /></G><Corner $r={2} $b={-6} /></Cell>
      <Cell><G><L d="M5 22 L13 16 L21 26 L29 16 L37 26 L45 16" w={4} /></G></Cell>
      <Cell><G><L d="M5 22 L13 16 L21 26 L29 16 L37 26 L45 16" w={4} /><L d="M25 6 V36" /></G></Cell>
      <Cell><G><L d="M11 24 C6 14 17 12 25 24 C31 32 42 30 39 20" w={4} /></G></Cell>
      <Cell><G><L d="M9 28 C4 16 20 16 25 24 C30 32 46 30 41 18" w={4} /></G></Cell>
    </PaletteRow>
    <PaletteRow>
      <Cell><G><L d="M38 14 L12 24 L38 34" /></G></Cell>
      <Cell><G><L d="M12 14 L38 24 L12 34" /></G></Cell>
      <Cell><G><path d="M5 24 L25 15 L45 24 L25 33Z" fill="none" stroke="currentColor" strokeWidth="2" /></G></Cell>
      <Cell $hi><G><circle cx="25" cy="11" r="8" fill="none" stroke="currentColor" strokeWidth="2" /><path d="M7 32 L42 24 V27 L7 35Z M7 38 H43 V45 H7Z" /></G></Cell>
      <Cell $hi><G><L d="M16 11 H34 M25 2 V20" /><path d="M7 28 L43 24 V30 L7 34Z M7 36 H43 V44 H7Z" /></G></Cell>
      <Cell><G><L d="M25 2 V18 M18 6 L32 14 M32 6 L18 14" w={1.8} /><Head x={21} y={40} /><Stem x={27} y1={40} y2={22} /></G></Cell>
      <Cell><G><Head x={21} y={20} /><Stem x={27} y1={20} y2={2} /><L d="M25 30 V46 M18 34 L32 42 M32 34 L18 42" w={1.8} /></G></Cell>
      <Cell />
    </PaletteRow>
  </>
);

const AutoNotes = ({ auto }) => (
  <G>
    <Head x={11} y={auto ? 27 : 37} /><Head x={34} y={auto ? 27 : 37} />
    <Stem x={17} y1={auto ? 27 : 37} y2={3} /><Stem x={40} y1={auto ? 27 : 37} y2={3} />
    <rect x="16" y="1" width="25" height="3" />
    {auto && <T y={46} s={14} b={false}>AUTO</T>}
  </G>
);

const FlipNotes = ({ auto }) => (
  <G>
    <Head x={12} y={auto ? 27 : 37} /><Stem x={18} y1={auto ? 27 : 37} y2={8} />
    <Head x={34} y={7} /><Stem x={28} y1={8} y2={auto ? 32 : 37} />
    {auto && <T y={46} s={14} b={false}>AUTO</T>}
  </G>
);

const ExtraRows = () => (
  <>
    <PaletteRow>
      <Cell>
        <G>
          <rect x="9" y="8" width="32" height="32" />
          <L d="M9 16 H41 M9 24 H41 M9 32 H41 M15 8 V40 M21 8 V40 M27 8 V40 M33 8 V40" w={1} stroke="#363a44" />
        </G>
      </Cell>
      <Cell><G><L d="M31 6 V34 L19 44" /></G></Cell>
      <Cell><G><T y={33} s={26}>BY</T></G></Cell>
      <Cell $hi><G><T y={32} s={21}>2:51</T></G></Cell>
      <Cell $hi><G><T y={31} s={19.5}>TXT</T></G></Cell>
      <Cell $hi><G><rect x="10" y="8" width="30" height="31" rx="3" fill="none" stroke="currentColor" strokeWidth="2" /><T y={32} s={23}>A</T></G></Cell>
      <Cell><FaLock size={28} /></Cell>
      <Cell $hi><G><T y={38} s={38} b={false} f={SANS}>¶</T></G></Cell>
    </PaletteRow>
    <PaletteRow>
      <Cell><AutoNotes auto /></Cell>
      <Cell><AutoNotes /></Cell>
      <Cell><AutoNotes /></Cell>
      <Cell><G><L d="M9 6 H41 M9 12 H41" w={3} /><L d="M11 6 V44 M18 18 V44 M32 18 V44 M39 6 V44" w={2} /></G></Cell>
      <Cell><FlipNotes auto /></Cell>
      <Cell><FlipNotes /></Cell>
      <Cell>
        <G>
          <L d="M9 14 V7 H22 V14 M28 14 V7 H41 V14 M8 42 V33 H42 V42" w={1.8} />
          <path d="M10 15 H21 L15.5 24Z M29 15 H40 L34.5 24Z" />
        </G>
      </Cell>
      <Cell />
    </PaletteRow>
  </>
);

const Bars = ({ hs, w = 6, gap = 3 }) => (
  <>
    {hs.map((h, i) => <rect key={i} x={8 + i * (w + gap)} y={44 - h} width={w} height={h} />)}
  </>
);

const LevelRow = () => (
  <PaletteRow>
    <Cell $hi><G><Note x={19} y={30} h={30} /><rect x="31" y="19" width="13" height="3" /><rect x="31" y="26" width="13" height="3" /></G></Cell>
    <Cell $hi><G><Bars hs={[12, 17, 20]} w={7} /><T x={34} y={18} s={18} f={SANS}>M</T></G></Cell>
    <Cell $hi><G><Bars hs={[20, 14, 10, 14, 20]} w={4} gap={3} /><T x={35} y={16} s={18} f={SANS}>M</T></G></Cell>
    <Cell $hi><G><Bars hs={[13, 20, 28, 30]} w={6} /></G></Cell>
    <Cell $hi><G><Bars hs={[30, 20, 13, 20, 30]} w={4} gap={4} /></G></Cell>
  </PaletteRow>
);

const marks = Array.from({ length: 6 }, (_, row) =>
  Array.from({ length: 7 }, (_, col) => ({ key: `${row}-${col}`, faint: row > 0 && col > 0 && col < 6 }))
).flat();

export default function App() {
  return (
    <Page>
      <GlobalStyle />
      <TitleBar>
        <Lights>
          <Light $c="#fc5753" />
          <Light $c="#fdbc40" />
          <Light $c="#33c748" />
        </Lights>
        Drumkit
      </TitleBar>

      <Toolbar>
        <Seg>
          <SegBtn $w={70} $tone="blue"><PanelIcon side="left" /></SegBtn>
          <SegBtn $w={69} $tone="blue"><PanelIcon side="bottom" /></SegBtn>
          <SegBtn $w={69} $tone="blue"><PanelIcon side="right" /></SegBtn>
        </Seg>
        <ZoomCol>
          <Seg>
            <SegBtn $w={150} $start $pl={5} $gap={6}>
              <Search size={38} strokeWidth={1.6} />
              <span>100%</span>
              <Stepper h={26} />
            </SegBtn>
            <SegBtn $w={73} $start $pl={8} $gap={8}>
              <LayoutIcon />
              <Stepper h={24} />
            </SegBtn>
          </Seg>
          <ZoomTrack><ZoomFill /></ZoomTrack>
        </ZoomCol>
        <Seg $ml={13}>
          <SegBtn $w={69}><Undo2 size={34} strokeWidth={2.4} /></SegBtn>
          <SegBtn $w={69}><Redo2 size={34} strokeWidth={2.4} /></SegBtn>
        </Seg>
        <Transport><TransportIcons /></Transport>
        <Lcd>
          <LcdTop>
            <DrumIcon s={30} c="#fff" />
            <LcdName>1. Drums</LcdName>
            <LcdCell $w={42} $line><Hourglass /></LcdCell>
            <LcdCell $w={41} $blue><Metronome /></LcdCell>
            <LcdCell $w={32}><VDots /></LcdCell>
            <LcdCell $w={81} $line />
          </LcdTop>
          <LcdBottom>
            <span />
            <span>1/1</span>
            <Inline $gap={4}><WarnDot>!</WarnDot>0.0:4.0</Inline>
            <span>00:00 / 00:02</span>
            <Inline $gap={3}><Beamed />=<Beamed /></Inline>
            <Inline $gap={4}><TinyNote />=<TempoValue>120</TempoValue></Inline>
            <TimeSig />
          </LcdBottom>
        </Lcd>
        <Seg $ml={13}>
          <SegBtn $w={70}><LoopIcon /></SegBtn>
          <SegBtn $w={128} $start $pl={14} $gap={14} $fg="#5d6e83">
            <TinyNote s={1.3} />
            <span>100%</span>
          </SegBtn>
          <SegBtn $w={34} $tone="dim"><Stepper h={26} c="#4f5c6e" /></SegBtn>
        </Seg>
        <Seg $ml={11}>
          <SegBtn $w={90} $start $pl={8} $gap={10} $fg="#5d6e83"><ForkIcon /><span>0</span></SegBtn>
          <SegBtn $w={39} $tone="dim" $fg="#5d6e83" $fs={28}>
            <svg width="20" height="36" viewBox="0 0 20 36" fill="#607286">
              <rect x="2" y="7" width="16" height="4" />
              <rect x="8" y="1" width="4" height="16" />
              <rect x="2" y="27" width="16" height="4" />
            </svg>
          </SegBtn>
        </Seg>
        <Seg $ml={198}>
          <SegBtn $w={69} $tone="dim"><Headstock /></SegBtn>
          <SegBtn $w={70} $tone="dim"><PianoIcon /></SegBtn>
          <SegBtn $w={68}><DrumIcon s={32} c="#fff" /></SegBtn>
        </Seg>
        <Seg $ml={13}>
          <SegBtn $w={69}><ForkWaves /></SegBtn>
          <SegBtn $w={69}><CableIcon /></SegBtn>
        </Seg>
      </Toolbar>

      <DocBar>
        <DocTitle>
          Drumkit
          <DocDot />
        </DocTitle>
        <DocPlus>+</DocPlus>
      </DocBar>

      <Main>
        <LeftPanel>
          <ButtonRow $pl={72}>
            <Tool $on $bold $r="8px 0 0 8px">1</Tool>
            <Tool $joined $bold $r="0">2</Tool>
            <Tool $joined $bold $r="0">3</Tool>
            <Tool $joined $bold $r="0 8px 8px 0">4</Tool>
            <Tool $w={44} $ml={6}>
              <svg width="30" height="34" viewBox="0 0 30 34" fill="#c8ccd8">
                <path d="M0 10 H28 M0 15 H28 M0 20 H28 M0 25 H28" stroke="#c8ccd8" strokeWidth="1.6" />
                <path d="M15 2 H26 V12 H24 V5 H17 V14 H15Z" fill="#fff" />
                <path d="M3 33 V22 Q8 19 12 17 L13 20 Q6 23 4 24 V33Z" fill="#fff" />
              </svg>
            </Tool>
            <Tool $w={44} $ml={12}>
              <svg width="32" height="30" viewBox="0 0 32 30" fill="#fff">
                <path d="M1 5 H31" stroke="#fff" strokeWidth="2" />
                <path d="M6 0 V10 L0 5Z M26 0 V10 L32 5Z M3 13 H29 L16 30Z" />
              </svg>
            </Tool>
          </ButtonRow>
          <ButtonRow $pl={82} $gap={12} $mt={12}>
            <Tool $w={128} $fg="#cfd4dc" $fs={25}><MicIcon />歌词</Tool>
            <Tool $w={128} $fg="#cfd4dc" $fs={25}><ChordIcon />和弦</Tool>
          </ButtonRow>

          <Divider $mt={23} $mb={10} />
          <StaffRows />
          <Divider $mt={13} $mb={12} />
          <NoteRows />
          <Divider $mt={12} $mb={9} />
          <TechniqueRows />
          <Divider $mt={13} $mb={9} />
          <ExtraRows />
          <Divider $mt={13} $mb={9} />
          <LevelRow />
        </LeftPanel>

        <Score>
          <ScoreDrawing />
        </Score>

        <RightPanel>
          <Tabs>
            <Tab $f={252}>曲目</Tab>
            <Tab $f={248} $on>音轨</Tab>
          </Tabs>
          <Inspector>
            <Heading $mt={24}>信息</Heading>
            <InfoRow>
              <InfoCell $w={44}><Swatch /></InfoCell>
              <InfoCell $w={47}><DrumIcon s={30} c="#fff" /></InfoCell>
              <InfoCell $grow $light $pl={8}>Drums</InfoCell>
              <InfoCell $w={130} $light $pl={10}>drm.</InfoCell>
            </InfoRow>

            <Heading $mt={56}>记谱法</Heading>
            <FieldRow $mt={16}>
              <FieldLabel $w={63}>样式</FieldLabel>
              <Seg>
                <SegBtn $w={46} $tone="blue"><ScoreStyleIcon kind="tab" /></SegBtn>
                <SegBtn $w={46} $tone="blue"><ScoreStyleIcon kind="std" /></SegBtn>
                <SegBtn $w={45} $tone="blue"><ScoreStyleIcon kind="slash" /></SegBtn>
              </Seg>
            </FieldRow>

            <SoundHead>
              <Heading $mt={0}>音源</Heading>
              <SoundActions>
                <SquareBtn $fs={36}>+</SquareBtn>
                <SquareBtn $fs={30}>A</SquareBtn>
                <EngineSeg>
                  <EngineBtn $on><EngineTag $c="#4a86d8">RSE</EngineTag></EngineBtn>
                  <EngineBtn><EngineTag $c="#333">MIDI</EngineTag></EngineBtn>
                </EngineSeg>
              </SoundActions>
            </SoundHead>
            <SoundBox>
              <SoundMain>
                <SoundTop>
                  <SoundName>1. Drums<Stepper h={24} /></SoundName>
                  <SoundMenu><VDots /></SoundMenu>
                </SoundTop>
                <SoundFx>
                  <DrumIcon s={30} />
                  <FxArrow />
                  <FxChip />
                  <FxChip />
                  <ChipStack>
                    <FxChip />
                    <ChipBelow><FxChip /></ChipBelow>
                  </ChipStack>
                  <FxDrop />
                </SoundFx>
              </SoundMain>
              <SoundVol><FaVolumeUp /></SoundVol>
            </SoundBox>

            <Heading $mt={44}>演奏</Heading>
            <FieldRow $mt={14}>
              <FieldLabel $w={176} $right>打击乐槌</FieldLabel>
              <Select>预设<Stepper h={24} /></Select>
            </FieldRow>
            <FieldRow $mt={8}>
              <FieldLabel $w={176} $right>重读</FieldLabel>
              <Slider><Knob /></Slider>
            </FieldRow>
          </Inspector>
        </RightPanel>
      </Main>

      <Mixer>
        <MixerRow $h={39}>
          <Accent />
          <Slot><svg width="26" height="26" viewBox="0 0 26 26" fill="#fff"><rect y="11" width="26" height="4" /><rect x="11" width="4" height="26" /></svg></Slot>
          <Slot $start $pl={45}>
            音轨<MenuChip><VDots /></MenuChip>
            <HeaderArrows width="70" height="20" viewBox="0 0 70 20" fill="none" stroke="#3b404b" strokeWidth="3">
              <path d="M0 4 L10 16 L20 4 M36 16 L46 4 L56 16" />
            </HeaderArrows>
          </Slot>
          <Slot>
            <svg width="30" height="28" viewBox="0 0 30 28" fill="none" stroke="#3b404b" strokeWidth="3">
              <path d="M5 2 V26 M13 2 V26 M13 14 H28" />
            </svg>
          </Slot>
          <Slot><MuteIcon c="#5a6f84" /></Slot>
          <Slot $c="#5a6f84"><FaHeadphones size={32} /></Slot>
          <Slot $start $pl={148}>音量</Slot>
          <Slot />
          <Slot $start $pl={29}>相位</Slot>
          <Slot />
          <EqClip><span>均衡器</span></EqClip>
          <BarCell>
            <BarMark />
            1
          </BarCell>
          <span />
        </MixerRow>

        <MixerRow $on>
          <Accent $on />
          <Slot $c="#fff"><DrumIcon s={30} /></Slot>
          <Slot $start><RowNo>1.</RowNo>&nbsp;Drums</Slot>
          <Slot $c="#fff"><FaEye size={32} /></Slot>
          <Slot><MuteIcon c="#566a7d" /></Slot>
          <Slot $c="#566a7d"><FaHeadphones size={32} /></Slot>
          <FaderWrap>
            <FaderTrack $w={230} />
            <FaderTrack $w={22} />
            <FaderHandle />
          </FaderWrap>
          <Slot><LetterA>A</LetterA></Slot>
          <Slot $start $pl={15}><PanKnob /></Slot>
          <Slot><LetterA>A</LetterA></Slot>
          <Slot><MixIcon /></Slot>
          <BarCell $line><BeatBox /></BarCell>
          <span />
        </MixerRow>

        <MixerRow $h={46}>
          <Accent />
          <Slot />
          <Slot $start $pl={45}>主控台</Slot>
          <Slot />
          <Slot />
          <Slot />
          <FaderWrap>
            <FaderTrack $w={230} />
            <FaderTrack $w={22} />
            <FaderHandle />
          </FaderWrap>
          <Slot><LetterA $dim>A</LetterA></Slot>
          <Slot $start $pl={15}><PanKnob /></Slot>
          <Slot><LetterA $dim>A</LetterA></Slot>
          <Slot />
          <span />
          <span />
        </MixerRow>
      </Mixer>

      <WatermarkLayer>
        {marks.map(m => <Watermark key={m.key} $faint={m.faint}>macmj.com</Watermark>)}
      </WatermarkLayer>
    </Page>
  );
}
